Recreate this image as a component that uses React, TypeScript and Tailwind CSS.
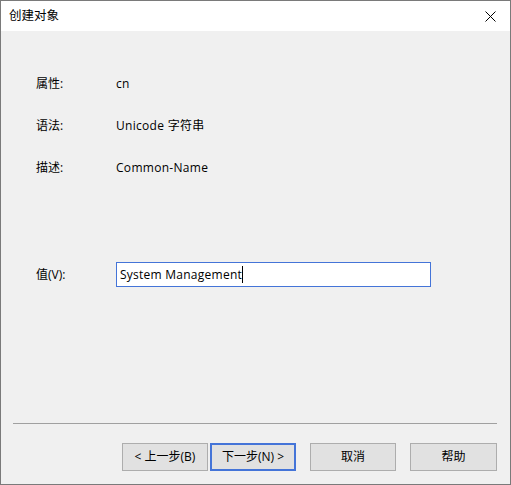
import React from "react";

const font = { fontFamily: '"Open Sans", "Noto Sans CJK SC", sans-serif' };

const fields = [
  { label: "属性:", value: "cn" },
  { label: "语法:", value: "Unicode 字符串" },
  { label: "描述:", value: "Common-Name" },
];

export default function App() {
  return (
    <div
      className="w-[511px] h-[485px] border border-[#7a7a7a] bg-[#f0f0f0] flex flex-col text-[12px] text-black"
      style={font}
    >
      <div className="h-[30px] bg-white flex items-center justify-between pl-[8px] pr-[10px] shrink-0">
        <span className="leading-none text-[12.5px]">创建对象</span>
        <svg width="11" height="11" viewBox="0 0 11 11" className="mr-[4px]">
          <path d="M0.5 0.5 L10.5 10.5 M10.5 0.5 L0.5 10.5" stroke="#000" strokeWidth="1" />
        </svg>
      </div>

      <div className="pl-[35px] pt-[44px] flex flex-col gap-[25px]">
        {fields.map((f) => (
          <div key={f.label} className="grid grid-cols-[80px_1fr] h-[17px] leading-[17px]">
            <span>{f.label}</span>
            <span className="tracking-[0.3px]">{f.value}</span>
          </div>
        ))}
      </div>

      <div className="pl-[35px] mt-[86px] grid grid-cols-[80px_315px] items-center">
        <span>值(V):</span>
        <div className="h-[25px] border border-[#4474d8] bg-white flex items-center pl-[3px]">
          <span className="tracking-[0.25px]">System Management</span>
          <span className="w-px h-[17px] bg-black" />
        </div>
      </div>

      <div className="mt-auto">
        <div className="ml-[12px] w-[484px] h-px bg-[#a0a0a0]" />
        <div className="flex pl-[121px] pt-[19px] pb-[13px]">
          <button className="w-[86px] h-[28px] border border-[#adadad] bg-[#e1e1e1]">
            &lt; 上一步(B)
          </button>
          <button className="ml-[2px] w-[86px] h-[28px] border-2 border-[#4474d8] bg-[#e1e1e1]">
            下一步(N) &gt;
          </button>
          <button className="ml-[14px] w-[86px] h-[28px] border border-[#adadad] bg-[#e1e1e1]">
            取消
          </button>
          <button className="ml-[14px] w-[87px] h-[28px] border border-[#adadad] bg-[#e1e1e1]">
            帮助
          </button>
        </div>
      </div>
    </div>
  );
}
